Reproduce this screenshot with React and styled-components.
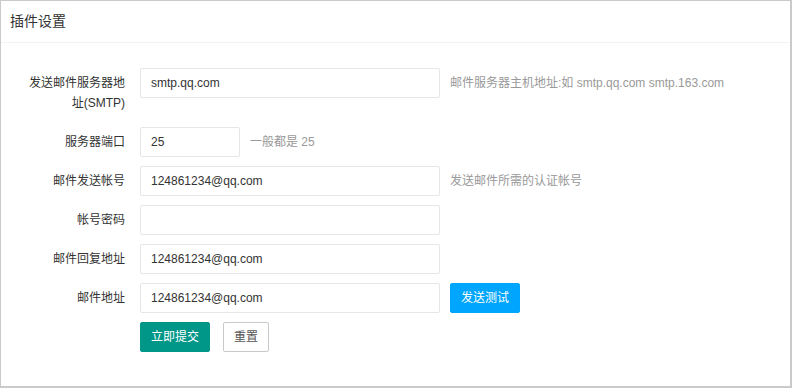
import React from "react";
import styled, { createGlobalStyle } from "styled-components";

const Global = createGlobalStyle`
  html, body { margin: 0; padding: 0; background: #fff; }
  body {
    font-family: "Liberation Sans", Arial, "Noto Sans CJK SC", sans-serif;
    font-size: 12px;
    color: #333;
  }
  * { box-sizing: border-box; }
`;

const Panel = styled.div`
  width: 792px;
  height: 388px;
  border-style: solid;
  border-color: #cacaca;
  border-width: 1px 2px 2px 1px;
  background: #fff;
`;

const Header = styled.div`
  height: 42px;
  line-height: 41px;
  padding-left: 9px;
  font-size: 14px;
  color: #333;
  border-bottom: 1px solid #f3f3f3;
`;

const Form = styled.form`
  padding-top: 25px;
  display: flex;
  flex-direction: column;
  gap: 9px;
`;

const Row = styled.div`
  display: flex;
  align-items: flex-start;
`;

const Label = styled.label`
  width: 139px;
  flex: none;
  padding: 5px 15px 5px 24px;
  line-height: 20px;
  text-align: right;
  color: #333;
  font-size: 12px;
`;

const Input = styled.input`
  width: ${(p) => p.$w}px;
  height: 30px;
  flex: none;
  border: 1px solid #e6e6e6;
  border-radius: 2px;
  padding: 0 10px;
  font-family: inherit;
  font-size: 12px;
  color: #333;
  background: #fff;
  outline: none;
`;

const Aux = styled.div`
  margin-left: 10px;
  line-height: 30px;
  color: #999;
  font-size: 12px;
  white-space: nowrap;
`;

const Button = styled.button`
  height: 30px;
  padding: 0 10px;
  border-radius: 2px;
  font-family: inherit;
  font-size: 12px;
  line-height: 28px;
  cursor: pointer;
  white-space: nowrap;
  border: 1px solid
    ${(p) =>
      p.$variant === "primary" ? "#009688" : p.$variant === "blue" ? "#00a5fd" : "#c9c9c9"};
  background: ${(p) =>
    p.$variant === "primary" ? "#009688" : p.$variant === "blue" ? "#00a5fd" : "#fff"};
  color: ${(p) => (p.$variant === "default" ? "#555" : "#fff")};
`;

const SideButton = styled(Button)`
  margin-left: 10px;
`;

const Actions = styled.div`
  display: flex;
  gap: 13px;
  padding-left: 139px;
`;

const rows = [
  { label: "发送邮件服务器地址(SMTP)", value: "smtp.qq.com", w: 300, aux: "邮件服务器主机地址:如 smtp.qq.com smtp.163.com" },
  { label: "服务器端口", value: "25", w: 100, aux: "一般都是 25" },
  { label: "邮件发送帐号", value: "124861234@qq.com", w: 300, aux: "发送邮件所需的认证帐号" },
  { label: "帐号密码", value: "", w: 300, type: "password" },
  { label: "邮件回复地址", value: "124861234@qq.com", w: 300 },
  { label: "邮件地址", value: "124861234@qq.com", w: 300, test: true },
];

export default function App() {
  return (
    <>
      <Global />
      <Panel>
        <Header>插件设置</Header>
        <Form onSubmit={(e) => e.preventDefault()}>
          {rows.map((r) => (
            <Row key={r.label}>
              <Label>{r.label}</Label>
              <Input $w={r.w} type={r.type || "text"} defaultValue={r.value} />
              {r.aux && <Aux>{r.aux}</Aux>}
              {r.test && (
                <SideButton type="button" $variant="blue">
                  发送测试
                </SideButton>
              )}
            </Row>
          ))}
          <Actions>
            <Button type="submit" $variant="primary">立即提交</Button>
            <Button type="reset" $variant="default">重置</Button>
          </Actions>
        </Form>
      </Panel>
    </>
  );
}
